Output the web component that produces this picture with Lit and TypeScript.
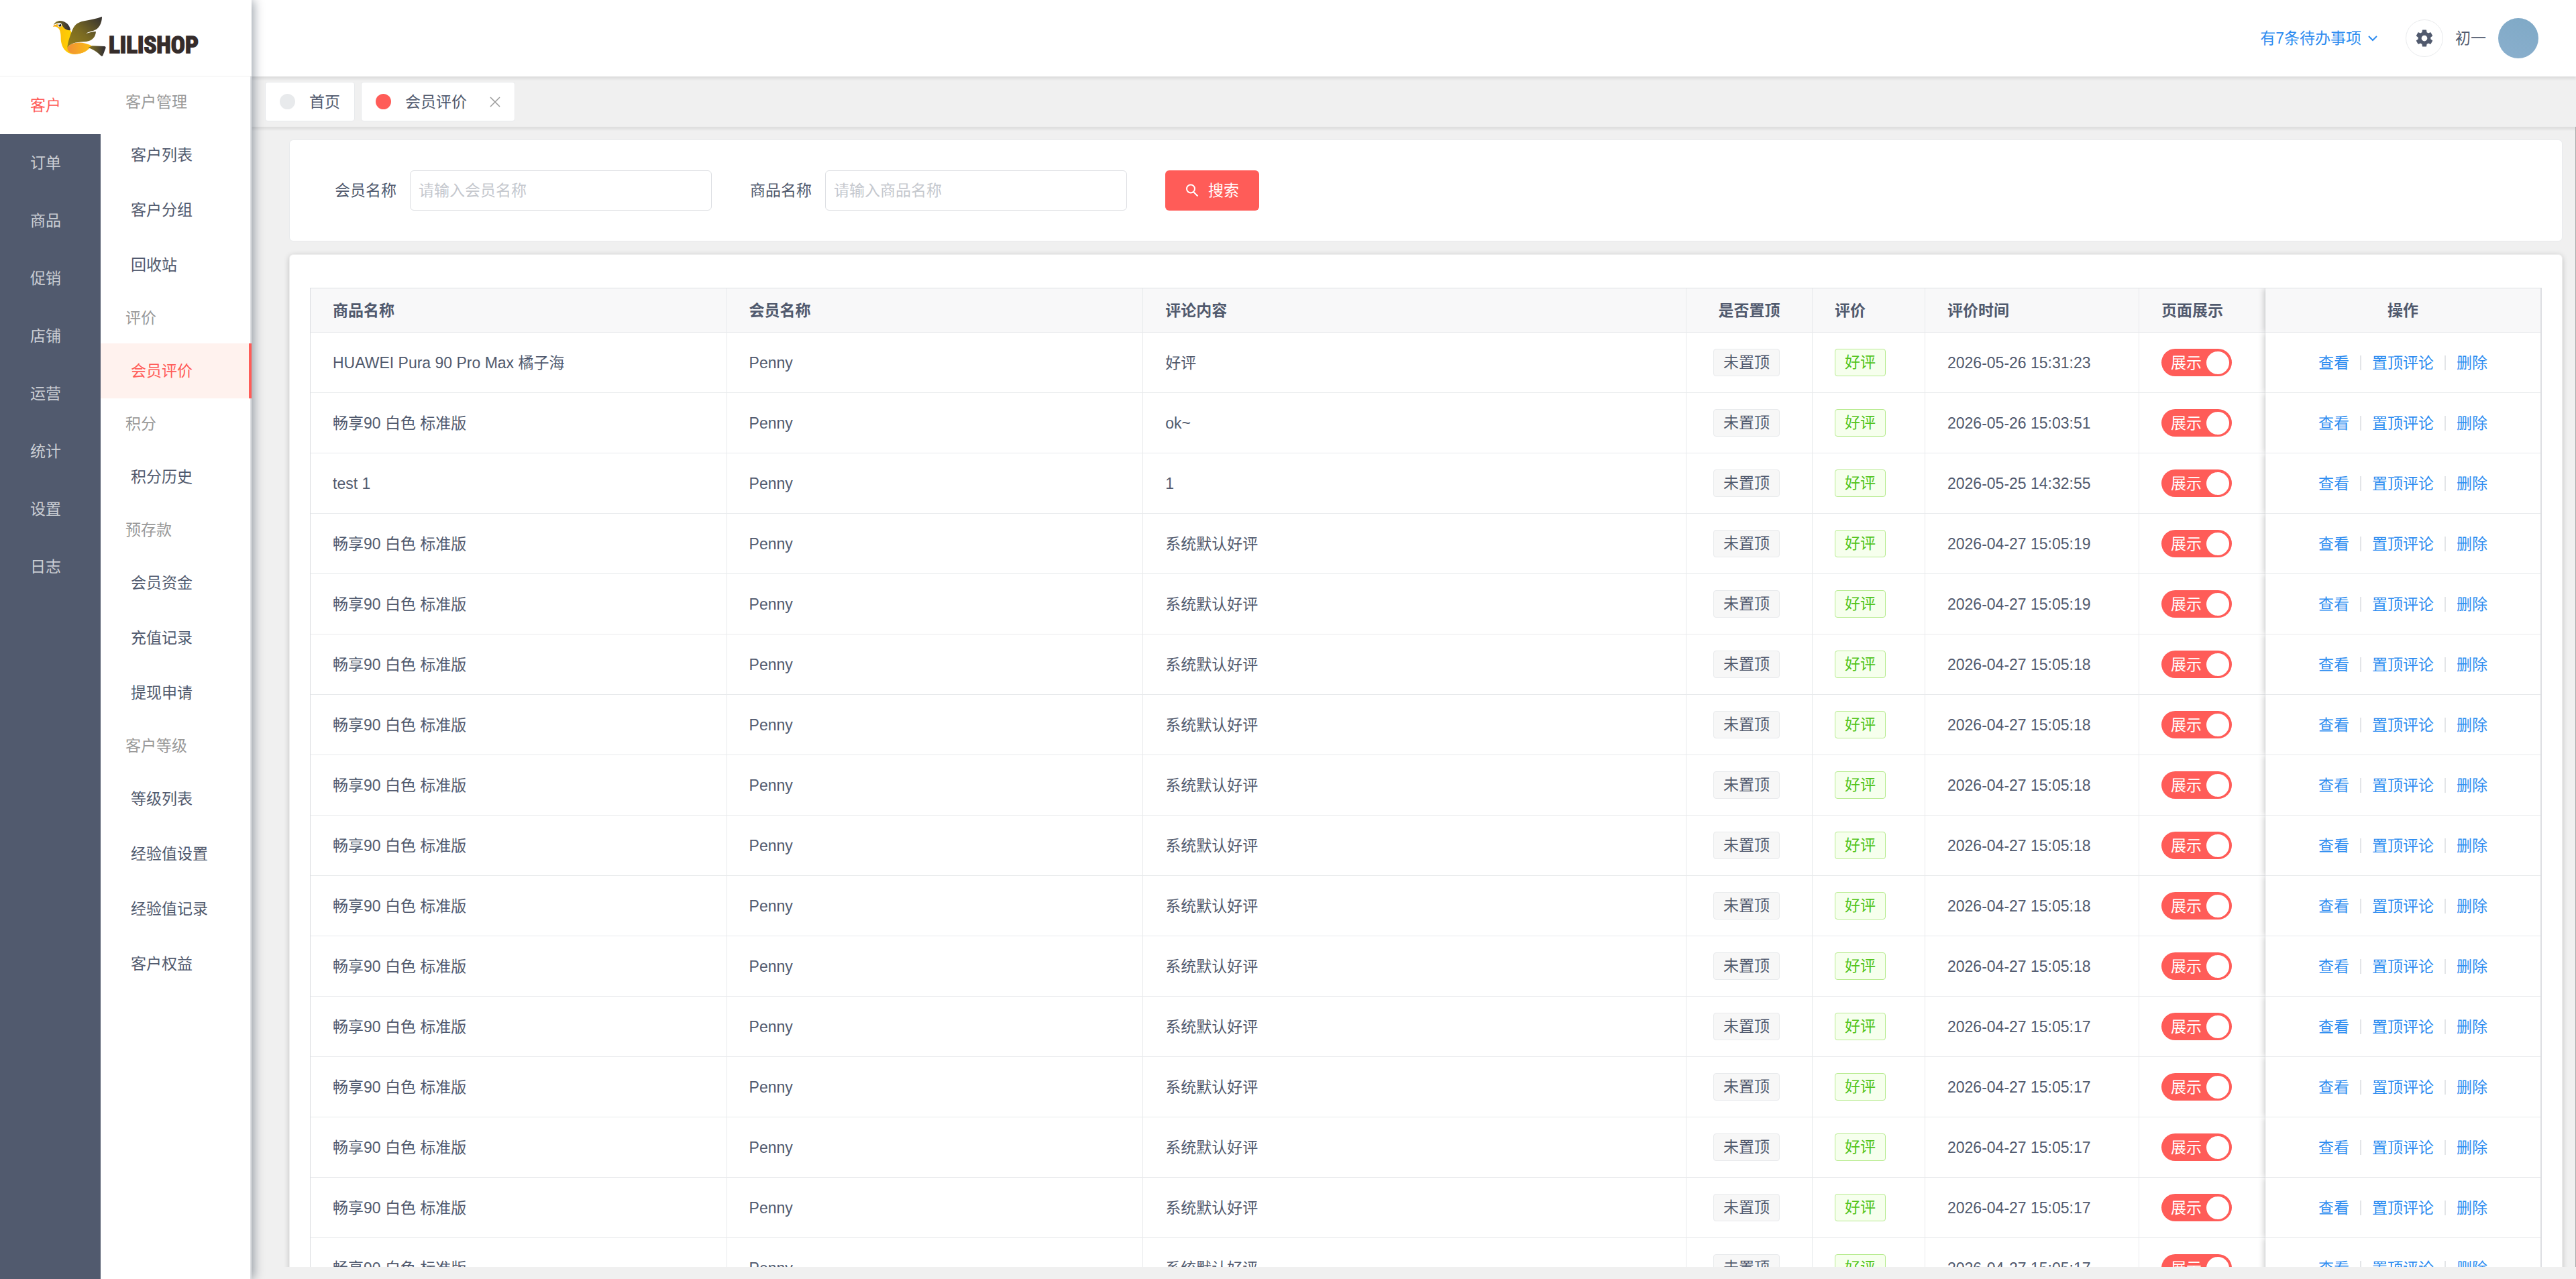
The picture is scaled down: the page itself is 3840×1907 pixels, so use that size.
import { LitElement, css, html, svg, type TemplateResult } from 'lit';
import { customElement, property, state } from 'lit/decorators.js';
import { classMap } from 'lit/directives/class-map.js';

interface MenuGroup {
  title: string;
  items: string[];
}

interface Review {
  goods: string;
  member: string;
  content: string;
  time: string;
}

const NAV = ['客户', '订单', '商品', '促销', '店铺', '运营', '统计', '设置', '日志'];

const MENU: MenuGroup[] = [
  { title: '客户管理', items: ['客户列表', '客户分组', '回收站'] },
  { title: '评价', items: ['会员评价'] },
  { title: '积分', items: ['积分历史'] },
  { title: '预存款', items: ['会员资金', '充值记录', '提现申请'] },
  { title: '客户等级', items: ['等级列表', '经验值设置', '经验值记录', '客户权益'] },
];

const DEFAULT_TIMES = [19, 19, 18, 18, 18, 18, 18, 18, 17, 17, 17, 17, 17];

const REVIEWS: Review[] = [
  { goods: 'HUAWEI Pura 90 Pro Max 橘子海', member: 'Penny', content: '好评', time: '2026-05-26 15:31:23' },
  { goods: '畅享90 白色 标准版', member: 'Penny', content: 'ok~', time: '2026-05-26 15:03:51' },
  { goods: 'test 1', member: 'Penny', content: '1', time: '2026-05-25 14:32:55' },
  ...DEFAULT_TIMES.map((second) => ({
    goods: '畅享90 白色 标准版',
    member: 'Penny',
    content: '系统默认好评',
    time: `2026-04-27 15:05:${second}`,
  })),
];

const base = css`
  * {
    box-sizing: border-box;
  }

  a {
    color: inherit;
    text-decoration: none;
  }

  button,
  input {
    font: inherit;
    color: inherit;
  }
`;

@customElement('shop-logo')
export class ShopLogo extends LitElement {
  render(): TemplateResult {
    return html`<svg class="logo" viewBox="0 0 780 270" role="img" aria-label="LILISHOP">
      <defs>
        <linearGradient id="wing" x1="0" y1="1" x2="1" y2="0">
          <stop offset="0" stop-color="#96801a" />
          <stop offset="0.45" stop-color="#7a6a22" />
          <stop offset="1" stop-color="#333031" />
        </linearGradient>
        <linearGradient id="tail" x1="0" y1="0" x2="1" y2="0">
          <stop offset="0" stop-color="#8c7a20" />
          <stop offset="0.9" stop-color="#363233" />
        </linearGradient>
        <linearGradient id="body" x1="0" y1="0" x2="1" y2="0">
          <stop offset="0" stop-color="#fbb512" />
          <stop offset="0.5" stop-color="#ffd400" />
          <stop offset="1" stop-color="#fcbc10" />
        </linearGradient>
        <linearGradient id="belly" x1="0" y1="0" x2="1" y2="0">
          <stop offset="0" stop-color="#f08f37" />
          <stop offset="1" stop-color="#fcc010" />
        </linearGradient>
      </defs>
      ${svg`
        <path fill="url(#body)" d="M62 84C72 78 90 72 104 80C122 90 138 102 140 118L142 150L124 180C140 162 184 158 230 175C212 196 192 211 156 212C112 214 92 176 92 140C92 116 88 98 76 92C70 88 64 88 58 89Z" />
        <path fill="url(#belly)" d="M121 184C136 158 186 152 230 175C212 196 192 211 156 212C134 212 122 200 121 184Z" />
        <path fill="url(#tail)" d="M60 82C66 66 84 60 102 65C122 72 133 86 135 105C122 107 110 101 102 90C98 78 88 72 78 74C70 75 64 78 60 82Z" />
        <circle cx="87" cy="82" r="9" fill="#fff" />
        <circle cx="88" cy="83" r="6" fill="#222" />
        <circle cx="86" cy="80" r="2" fill="#fff" />
        <path fill="#f4a21c" d="M57 89C60 82 68 78 77 81C72 86 67 88 57 89Z" />
        <path fill="url(#wing)" d="M121 182C124 156 134 128 142 108C152 82 166 70 196 64C224 58 252 54 276 44C276 74 262 100 238 107C226 110 214 113 204 120C220 116 234 111 249 111C247 136 234 152 206 156C174 158 140 158 121 182Z" />
        <path fill="url(#tail)" d="M214 183L232 175L288 177C293 178 294 182 292 187L280 218C278 222 274 222 271 219C256 204 236 190 214 183Z" />
      `}
      <text class="word" x="306" y="208">LILISHOP</text>
    </svg>`;
  }

  static styles = css`
    :host {
      display: block;
    }

    .logo {
      display: block;
      width: 260px;
      height: 90px;
    }

    .word {
      font: 700 105px 'Roboto Condensed', 'Liberation Sans Narrow', 'Liberation Sans', sans-serif;
      fill: #352c2b;
      stroke: #352c2b;
      stroke-width: 5px;
    }
  `;
}

@customElement('side-menu')
export class SideMenu extends LitElement {
  @state() nav = '客户';
  @state() current = '会员评价';

  render(): TemplateResult {
    return html`
      <div class="brand"><shop-logo></shop-logo></div>
      <div class="columns">
        <nav class="primary">
          ${NAV.map(
            (name) => html`<a href="#" class=${classMap({ nav: true, active: name === this.nav })}>${name}</a>`
          )}
        </nav>
        <nav class="secondary">
          ${MENU.map(
            (group) => html`
              <div class="title">${group.title}</div>
              ${group.items.map(
                (name) =>
                  html`<a href="#" class=${classMap({ item: true, active: name === this.current })}>${name}</a>`
              )}
            `
          )}
        </nav>
      </div>
    `;
  }

  static styles = [
    base,
    css`
      :host {
        display: flex;
        flex-direction: column;
        width: 375px;
        flex: none;
        background: #fff;
        box-shadow: 3px 0 15px rgba(0, 21, 41, 0.4);
        z-index: 2;
      }

      .brand {
        height: 114px;
        padding: 10px 0 0 60px;
        border-bottom: 1px solid #eee;
      }

      .columns {
        display: flex;
        flex: 1;
        min-height: 0;
      }

      .primary {
        width: 150px;
        background: #515a6e;
      }

      .nav {
        display: block;
        height: 86px;
        padding-left: 45px;
        line-height: 86px;
        color: #cbced4;
      }

      .nav.active {
        background: #fff;
        color: #ff5c58;
      }

      .secondary {
        flex: 1;
        border-right: 2px solid #dcdee2;
      }

      .title {
        height: 76px;
        padding-left: 37px;
        line-height: 76px;
        color: #999;
      }

      .item {
        display: block;
        height: 82px;
        padding-left: 45px;
        line-height: 82px;
      }

      .item.active {
        margin-right: -2px;
        border-right: 4px solid #ff5c58;
        background: #fff2ee;
        color: #ff5c58;
      }
    `,
  ];
}

@customElement('top-bar')
export class TopBar extends LitElement {
  @property({ type: Number }) todo = 7;
  @property() user = '初一';

  render(): TemplateResult {
    return html`
      <button class="todo">
        有${this.todo}条待办事项
        <svg width="16" height="10" viewBox="0 0 16 10">
          <path d="M2 2l6 6 6-6" fill="none" stroke="currentColor" stroke-width="2" />
        </svg>
      </button>
      <button class="setting" aria-label="设置">
        <svg width="30" height="30" viewBox="0 0 24 24">
          <path
            fill="currentColor"
            d="M19.43 12.98c.04-.32.07-.64.07-.98s-.03-.66-.07-.98l2.11-1.65c.19-.15.24-.42.12-.64l-2-3.46c-.12-.22-.39-.3-.61-.22l-2.49 1c-.52-.4-1.08-.73-1.69-.98l-.38-2.65C14.46 2.18 14.25 2 14 2h-4c-.25 0-.46.18-.49.42l-.38 2.65c-.61.25-1.17.59-1.69.98l-2.49-1c-.23-.09-.49 0-.61.22l-2 3.46c-.13.22-.07.49.12.64l2.11 1.65c-.04.32-.07.65-.07.98s.03.66.07.98l-2.11 1.65c-.19.15-.24.42-.12.64l2 3.46c.12.22.39.3.61.22l2.49-1c.52.4 1.08.73 1.69.98l.38 2.65c.03.24.24.42.49.42h4c.25 0 .46-.18.49-.42l.38-2.65c.61-.25 1.17-.59 1.69-.98l2.49 1c.23.09.49 0 .61-.22l2-3.46c.12-.22.07-.49-.12-.64l-2.11-1.65zM12 15.5c-1.93 0-3.5-1.57-3.5-3.5s1.57-3.5 3.5-3.5 3.5 1.57 3.5 3.5-1.57 3.5-3.5 3.5z"
          />
        </svg>
      </button>
      <span class="user">${this.user}</span>
      <span class="avatar"></span>
    `;
  }

  static styles = [
    base,
    css`
      :host {
        display: flex;
        align-items: center;
        justify-content: flex-end;
        flex: none;
        height: 114px;
        padding-right: 56px;
        background: #fff;
        box-shadow: 0 4px 3px rgba(100, 100, 100, 0.12);
        z-index: 1;
      }

      button {
        padding: 0;
        border: 0;
        background: none;
      }

      .todo {
        display: flex;
        align-items: center;
        gap: 9px;
        margin-right: 41px;
        color: #2d8cf0;
      }

      .setting {
        display: flex;
        align-items: center;
        justify-content: center;
        width: 56px;
        height: 56px;
        border: 1px solid #e8eaec;
        border-radius: 50%;
      }

      .user {
        margin: 0 18px;
      }

      .avatar {
        width: 60px;
        height: 60px;
        border-radius: 50%;
        background: linear-gradient(200deg, #7fa9c6, #8aafcd);
      }
    `,
  ];
}

@customElement('page-tabs')
export class PageTabs extends LitElement {
  render(): TemplateResult {
    return html`
      <a class="tab" href="#"><span class="dot"></span>首页</a>
      <div class="tab">
        <span class="dot on"></span><a href="#">会员评价</a>
        <button class="close" aria-label="关闭">
          <svg width="16" height="16" viewBox="0 0 16 16">
            <path d="M1 1l14 14M15 1L1 15" fill="none" stroke="currentColor" stroke-width="1.5" />
          </svg>
        </button>
      </div>
    `;
  }

  static styles = [
    base,
    css`
      :host {
        display: flex;
        gap: 9px;
        flex: none;
        height: 75px;
        padding: 8px 20px;
        background: #f0f0f0;
        box-shadow: 0 4px 3px rgba(100, 100, 100, 0.12);
      }

      .tab {
        display: flex;
        align-items: center;
        height: 59px;
        padding: 0 21px;
        border: 1px solid #e8eaec;
        border-radius: 4px;
        background: #fff;
      }

      .dot {
        width: 23px;
        height: 23px;
        margin-right: 21px;
        border-radius: 50%;
        background: #e8eaec;
      }

      .dot.on {
        background: #ff5c58;
      }

      .close {
        display: flex;
        margin-left: 34px;
        padding: 0;
        border: 0;
        background: none;
        color: #999;
      }
    `,
  ];
}

@customElement('search-form')
export class SearchForm extends LitElement {
  render(): TemplateResult {
    return html`<form class="form" @submit=${(e: Event) => e.preventDefault()}>
      <div class="field">
        <label for="member">会员名称</label>
        <input id="member" type="text" placeholder="请输入会员名称" />
      </div>
      <div class="field">
        <label for="goods">商品名称</label>
        <input id="goods" type="text" placeholder="请输入商品名称" />
      </div>
      <button class="search" type="submit">
        <svg width="20" height="20" viewBox="0 0 20 20">
          <path
            d="M8 1.5a6 6 0 1 0 0 12a6 6 0 1 0 0-12M12.5 12.5l6 6"
            fill="none"
            stroke="currentColor"
            stroke-width="2"
          />
        </svg>
        搜索
      </button>
    </form>`;
  }

  static styles = [
    base,
    css`
      :host {
        display: block;
      }

      .form {
        display: flex;
        flex-wrap: wrap;
        gap: 24px 57px;
      }

      .field {
        display: flex;
        align-items: center;
      }

      label {
        width: 112px;
      }

      input {
        width: 450px;
        height: 60px;
        padding: 0 12px;
        border: 1px solid #dcdee2;
        border-radius: 6px;
        background: #fff;
      }

      input::placeholder {
        color: #c5c8ce;
      }

      .search {
        display: flex;
        align-items: center;
        justify-content: center;
        gap: 14px;
        width: 140px;
        height: 60px;
        padding: 0;
        border: 0;
        border-radius: 6px;
        background: #ff5c58;
        color: #fff;
      }
    `,
  ];
}

@customElement('review-table')
export class ReviewTable extends LitElement {
  @property({ attribute: false }) rows: Review[] = [];

  private renderRow(row: Review): TemplateResult {
    return html`<tr>
      <td>${row.goods}</td>
      <td>${row.member}</td>
      <td>${row.content}</td>
      <td class="center"><span class="tag top">未置顶</span></td>
      <td><span class="tag good">好评</span></td>
      <td>${row.time}</td>
      <td>
        <label class="switch"><input type="checkbox" checked />展示<span class="knob"></span></label>
      </td>
      <td class="fixed">
        <div class="actions">
          <a href="#">查看</a><span class="line"></span><a href="#">置顶评论</a><span class="line"></span
          ><a href="#">删除</a>
        </div>
      </td>
    </tr>`;
  }

  render(): TemplateResult {
    return html`<table>
      <colgroup>
        <col class="w-name" />
        <col class="w-name" />
        <col />
        <col class="w-top" />
        <col class="w-grade" />
        <col class="w-time" />
        <col class="w-show" />
        <col class="w-action" />
      </colgroup>
      <thead>
        <tr>
          <th>商品名称</th>
          <th>会员名称</th>
          <th>评论内容</th>
          <th class="center">是否置顶</th>
          <th>评价</th>
          <th>评价时间</th>
          <th>页面展示</th>
          <th class="fixed center">操作</th>
        </tr>
      </thead>
      <tbody>
        ${this.rows.map((row) => this.renderRow(row))}
      </tbody>
    </table>`;
  }

  static styles = [
    base,
    css`
      :host {
        display: block;
        overflow: hidden;
        border: 1px solid #dcdee2;
        border-right-width: 2px;
      }

      table {
        width: 100%;
        border-collapse: separate;
        border-spacing: 0;
        table-layout: fixed;
      }

      .w-name {
        width: 18.67%;
      }

      .w-top,
      .w-show {
        width: 188px;
      }

      .w-grade {
        width: 168px;
      }

      .w-time {
        width: 319px;
      }

      .w-action {
        width: 410px;
      }

      th,
      td {
        height: 90px;
        padding: 0 33px;
        border-right: 1px solid #e8eaec;
        border-bottom: 1px solid #e8eaec;
        background: #fff;
        text-align: left;
        white-space: nowrap;
      }

      th {
        height: 66px;
        background: #f8f8f9;
        font-weight: 700;
      }

      .center {
        text-align: center;
      }

      .fixed {
        position: relative;
        border-right: 0;
        box-shadow: -2px 0 9px rgba(0, 0, 0, 0.2);
        clip-path: inset(0 0 0 -16px);
      }

      .tag {
        display: inline-block;
        height: 41px;
        padding: 0 14px;
        border: 1px solid #e8eaec;
        border-radius: 4px;
        background: #f7f7f7;
        line-height: 39px;
        vertical-align: middle;
      }

      .top {
        margin-right: 8px;
      }

      .good {
        border-color: #b7eb8f;
        background: #f6ffed;
        color: #52c41a;
      }

      .switch {
        display: inline-flex;
        align-items: center;
        justify-content: space-between;
        width: 105px;
        height: 41px;
        padding: 0 4px 0 14px;
        border-radius: 21px;
        background: #ff5c58;
        color: #fff;
        vertical-align: middle;
      }

      .switch input {
        position: absolute;
        opacity: 0;
        pointer-events: none;
      }

      .knob {
        width: 34px;
        height: 34px;
        border-radius: 50%;
        background: #fff;
      }

      .actions {
        display: flex;
        align-items: center;
        justify-content: center;
        gap: 16px;
        color: #2d8cf0;
      }

      .line {
        width: 2px;
        height: 22px;
        background: #e3e5e8;
      }
    `,
  ];
}

@customElement('app-root')
export class AppRoot extends LitElement {
  render(): TemplateResult {
    return html`
      <side-menu></side-menu>
      <div class="main">
        <top-bar></top-bar>
        <page-tabs></page-tabs>
        <main class="content">
          <section class="card filter"><search-form></search-form></section>
          <section class="card list"><review-table .rows=${REVIEWS}></review-table></section>
        </main>
      </div>
    `;
  }

  static styles = [
    base,
    css`
      :host {
        display: flex;
        height: 100vh;
        overflow: hidden;
        background: #f0f0f0;
        color: #515a6e;
        font-family: 'Liberation Sans', 'Noto Sans CJK SC', sans-serif;
        font-size: 23px;
        line-height: 34px;
      }

      .main {
        display: flex;
        flex: 1;
        flex-direction: column;
        min-width: 0;
        padding-bottom: 18px;
      }

      .content {
        flex: 1;
        min-height: 0;
        overflow: hidden;
        padding: 19px 19px 0 56px;
        border-right: 1px solid #a8a8a8;
      }

      .card {
        border: 1px solid #e8eaec;
        border-radius: 6px;
        background: #fff;
      }

      .filter {
        margin-bottom: 19px;
        padding: 45px 67px;
      }

      .list {
        padding: 49px 30px;
        border-color: #eee;
        box-shadow: 0 2px 9px rgba(0, 0, 0, 0.2);
      }
    `,
  ];
}

declare global {
  interface HTMLElementTagNameMap {
    'app-root': AppRoot;
    'shop-logo': ShopLogo;
    'side-menu': SideMenu;
    'top-bar': TopBar;
    'page-tabs': PageTabs;
    'search-form': SearchForm;
    'review-table': ReviewTable;
  }
}
